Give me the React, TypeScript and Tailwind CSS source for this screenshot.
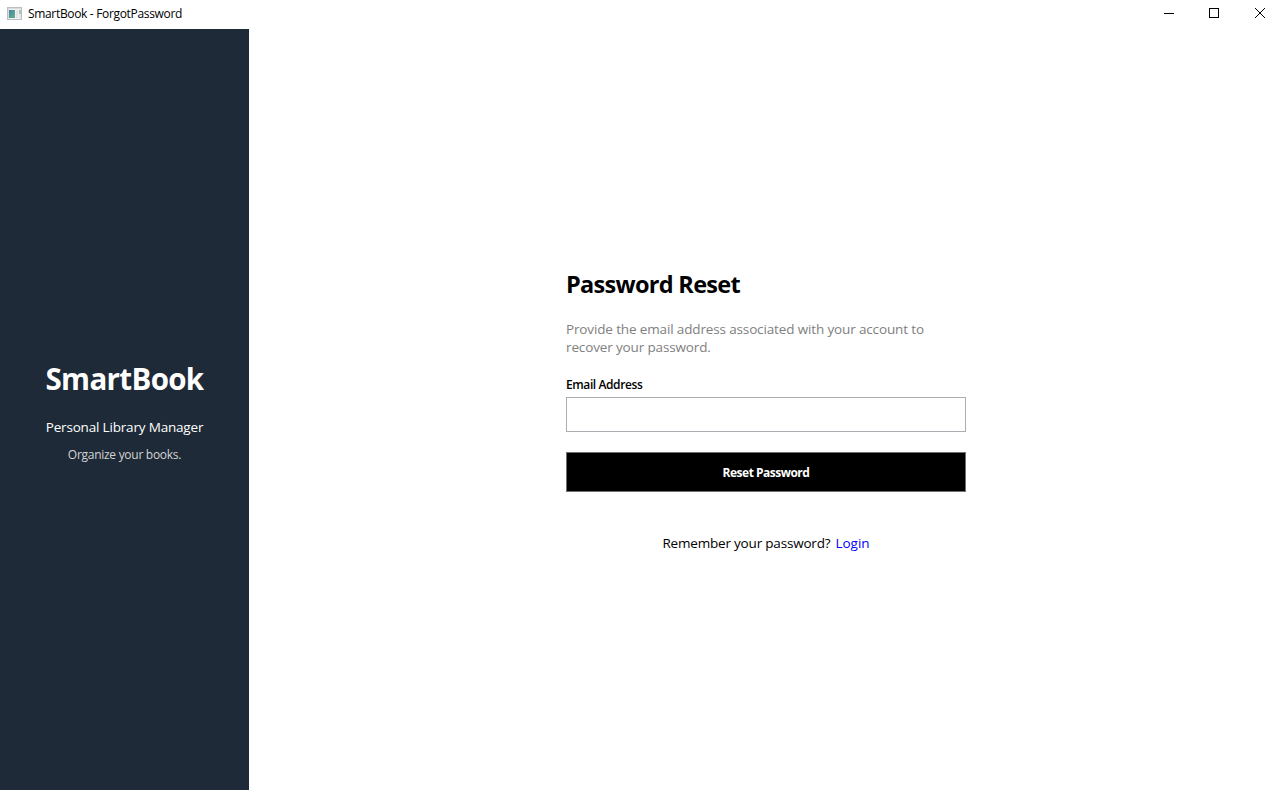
import React from "react";

function AppIcon() {
  return (
    <svg width="16" height="14" viewBox="0 0 16 14" shapeRendering="crispEdges" aria-hidden="true">
      <defs>
        <linearGradient id="pane" x1="0" y1="0" x2="1" y2="1">
          <stop offset="0" stopColor="#4a80a8" />
          <stop offset="1" stopColor="#5fb58c" />
        </linearGradient>
      </defs>
      <rect x="0.5" y="0.5" width="14" height="12" fill="#f1f1f1" stroke="#bcbec0" />
      <rect x="1" y="1" width="13" height="1" fill="#d9dadc" />
      <rect x="1" y="2" width="1" height="10" fill="#dcdcdc" />
      <rect x="2" y="3" width="6" height="8" fill="url(#pane)" />
      <rect x="9" y="3" width="2" height="8" fill="#e4e4e4" />
      <rect x="12" y="3" width="2" height="4" fill="#a3c4bb" />
      <rect x="12" y="7" width="2" height="4" fill="#e3e8e6" />
    </svg>
  );
}

function TitleBar() {
  return (
    <header className="flex h-[29px] shrink-0 items-start bg-white">
      <div className="flex h-[27px] items-center pl-[7px]">
        <AppIcon />
        <span className="ml-[5px] whitespace-nowrap text-[12px] leading-[16px] tracking-[-0.33px] text-black">
          SmartBook - ForgotPassword
        </span>
      </div>
      <div className="ml-auto flex">
        <button aria-label="Minimize" className="flex h-[26px] w-[40px] items-center justify-center">
          <svg width="10" height="10" shapeRendering="crispEdges">
            <path d="M0 5.5H10" stroke="#000" />
          </svg>
        </button>
        <button aria-label="Maximize" className="flex h-[26px] w-[50px] items-center justify-center">
          <svg width="10" height="10" shapeRendering="crispEdges">
            <rect x="0.5" y="0.5" width="9" height="9" fill="none" stroke="#000" />
          </svg>
        </button>
        <button aria-label="Close" className="flex h-[26px] w-[42px] items-center justify-center">
          <svg width="10" height="10">
            <path d="M0 0L10 10M10 0L0 10" stroke="#000" />
          </svg>
        </button>
      </div>
    </header>
  );
}

function Sidebar() {
  return (
    <aside className="flex w-[249px] shrink-0 flex-col items-center bg-[#1e2a38] pt-[328px] whitespace-nowrap text-white">
      <h1 className="text-[29.5px] leading-[44px] font-bold tracking-[-0.65px]">SmartBook</h1>
      <p className="mt-[16px] text-[13.5px] leading-[20px] tracking-[-0.18px]">Personal Library Manager</p>
      <p className="mt-[10px] text-[12px] leading-[16px] tracking-[-0.28px] text-[#d3d3d3]">Organize your books.</p>
    </aside>
  );
}

function ResetForm() {
  return (
    <main className="flex flex-1 justify-center bg-white pt-[237px] pl-[2px]">
      <form className="flex w-[400px] flex-col" onSubmit={(e) => e.preventDefault()}>
        <h2 className="text-[23.5px] leading-[36px] font-bold tracking-[-0.7px] whitespace-nowrap">Password Reset</h2>
        <p className="mt-[18px] text-[13.5px] leading-[18px] tracking-[-0.14px] whitespace-nowrap text-[#808080]">
          Provide the email address associated with your account to
          <br />
          recover your password.
        </p>
        <label htmlFor="email" className="mt-[21px] text-[12px] leading-[16px] font-semibold tracking-[-0.4px]">
          Email Address
        </label>
        <input id="email" type="email" className="mt-[4px] h-[35px] border border-[#abadb3] bg-white px-2 outline-none" />
        <button className="mt-[20px] h-[40px] border border-[#707070] bg-black pt-[2px] text-[12px] leading-[16px] font-bold tracking-[-0.5px] text-white">
          Reset Password
        </button>
        <p className="mt-[41px] flex justify-center gap-[5px] text-[13.5px] leading-[20px] tracking-[-0.19px] whitespace-nowrap">
          <span>Remember your password?</span>
          <a href="#login" className="tracking-normal text-[#0000ff]">Login</a>
        </p>
      </form>
    </main>
  );
}

export default function App() {
  return (
    <div className="flex h-[790px] w-[1281px] flex-col overflow-hidden bg-white font-['Open_Sans','Noto_Sans',sans-serif] text-black">
      <TitleBar />
      <div className="flex min-h-0 flex-1">
        <Sidebar />
        <ResetForm />
      </div>
    </div>
  );
}
